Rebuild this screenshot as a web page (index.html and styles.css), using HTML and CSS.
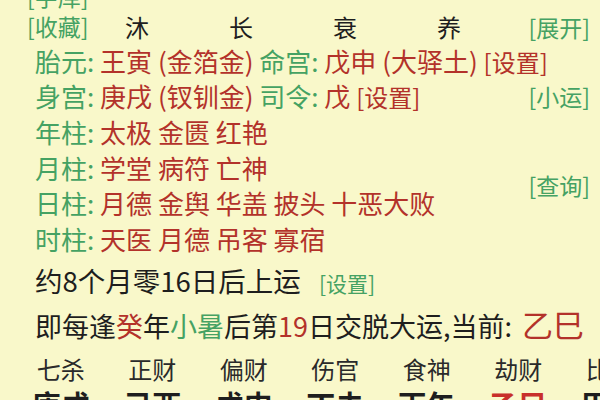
FILE: index.html
```html
<!DOCTYPE html>
<html lang="zh-CN">
<head>
<meta charset="utf-8">
<link rel="stylesheet" href="styles.css">
</head>
<body>
<div class="page">
  <div class="chart">
    <div class="cut g">[字库]</div>
    <div class="stages">
      <span class="g lead">[收藏]</span>
      <span class="stage">沐</span>
      <span class="stage">长</span>
      <span class="stage">衰</span>
      <span class="stage">养</span>
    </div>
    <div class="side g r1">[展开]</div>
    <div class="row wide"><span class="g">胎元:</span> <span class="r">王寅 (金箔金)</span> <span class="g">命宫:</span> <span class="r">戊申 (大驿土)</span> <span class="r set">[设置]</span></div>
    <div class="row"><span class="g">身宫:</span> <span class="r">庚戌 (钗钏金)</span> <span class="g">司令:</span> <span class="r">戊</span> <span class="r set">[设置]</span></div>
    <div class="side g r3">[小运]</div>
    <div class="row"><span class="g">年柱:</span> <span class="r">太极 金匮 红艳</span></div>
    <div class="row"><span class="g">月柱:</span> <span class="r">学堂 病符 亡神</span></div>
    <div class="row"><span class="g">日柱:</span> <span class="r">月德 金舆 华盖 披头 十恶大败</span></div>
    <div class="side g r56">[查询]</div>
    <div class="row"><span class="g">时柱:</span> <span class="r">天医 月德 吊客 寡宿</span></div>
  </div>
  <div class="start">约8个月零16日后上运 <span class="g small">[设置]</span></div>
  <div class="jiao">即每逢<span class="r">癸</span>年<span class="g">小暑</span>后第<span class="r">19</span>日交脱大运,当前: <span class="r big">乙巳</span></div>
  <div class="luck">
    <span class="god">七杀</span><span class="god">正财</span><span class="god">偏财</span><span class="god">伤官</span><span class="god">食神</span><span class="god">劫财</span><span class="god">比肩</span>
    <span class="gz">庚戌</span><span class="gz">己酉</span><span class="gz">戊申</span><span class="gz">丁未</span><span class="gz">丙午</span><span class="gz cur">乙巳</span><span class="gz">甲辰</span>
  </div>
</div>
</body>
</html>
```
FILE: styles.css
```css
html, body {
  margin: 0;
  padding: 0;
}
body {
  width: 600px;
  height: 400px;
  overflow: hidden;
  background: #f9f8ca;
  color: #1e1e1e;
  font-family: "Noto Sans CJK SC", "Noto Sans", sans-serif;
  font-size: 26px;
}
.page {
  margin-top: -18px;
  padding: 0 10px 0 27px;
}
.g { color: #45a263; }
.r { color: #b3322a; }

.chart {
  display: grid;
  grid-template-columns: 1fr auto;
  grid-template-rows: 28px 33px repeat(6, 35.5px);
  align-items: center;
}
.cut {
  grid-column: 1;
  grid-row: 1;
  font-size: 23px;
  line-height: 28px;
  white-space: nowrap;
}
.stages {
  grid-column: 1;
  grid-row: 2;
  display: grid;
  grid-template-columns: 58px repeat(4, 104px);
  align-items: center;
  font-size: 24px;
  line-height: 33px;
  white-space: nowrap;
}
.lead { font-size: 23px; }
.stage {
  text-align: center;
}
.side {
  grid-column: 2;
  font-size: 23px;
  line-height: 30px;
  white-space: nowrap;
}
.r1 { grid-row: 2; }
.r3 { grid-row: 4; }
.r56 { grid-row: 6 / span 2; }
.row {
  grid-column: 1;
  padding-left: 8px;
  line-height: 35.5px;
  white-space: nowrap;
}
.row.wide { grid-column: 1 / -1; }
.set { font-size: 24px; }

.start {
  padding-left: 8px;
  height: 49px;
  line-height: 49px;
  font-size: 27.5px;
  white-space: nowrap;
}
.small { font-size: 21px; margin-left: 12px; }
.jiao {
  padding-left: 8px;
  height: 37px;
  line-height: 37px;
  font-size: 27px;
  white-space: nowrap;
}
.big { font-size: 31px; margin-left: 4px; }

.luck {
  margin-top: 9px;
  margin-left: -12px;
  display: grid;
  grid-template-columns: repeat(7, 91.5px);
  text-align: center;
  white-space: nowrap;
}
.god {
  font-size: 24px;
  line-height: 36px;
  color: #2a2a2a;
}
.gz {
  font-size: 29px;
  font-weight: 700;
  line-height: 34px;
}
.gz.cur { color: #c8302a; }
```
